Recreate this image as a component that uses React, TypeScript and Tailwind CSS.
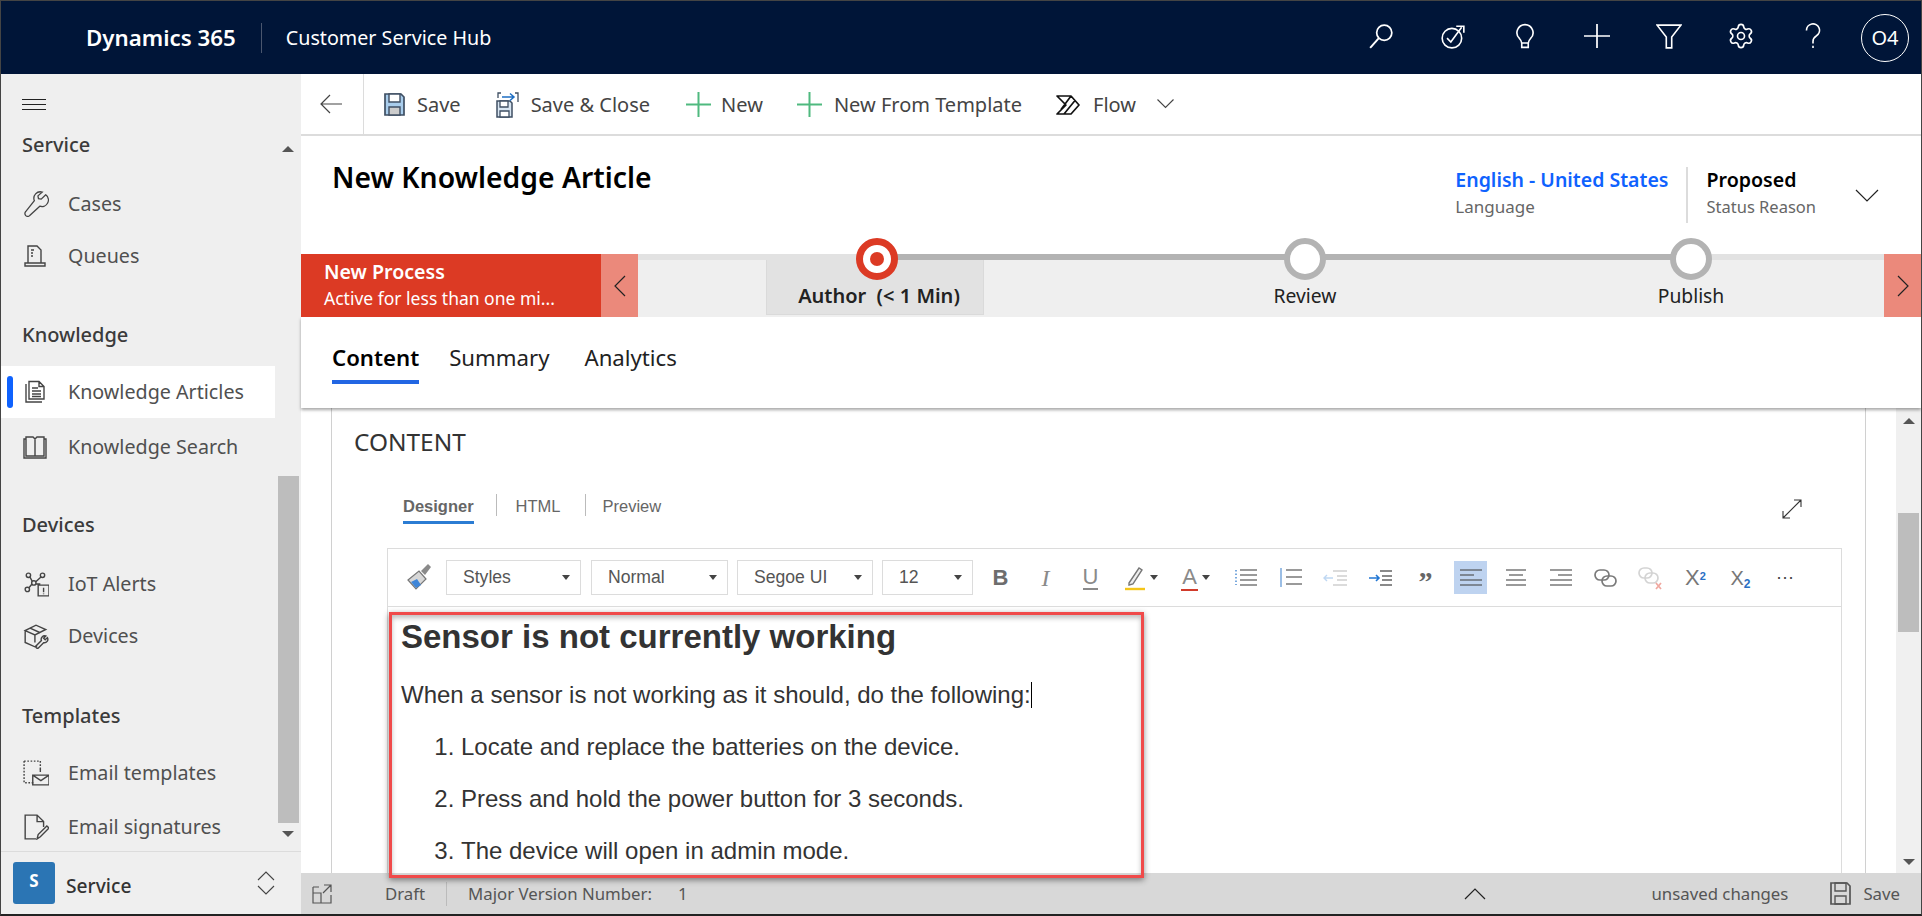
import type { ReactNode } from "react";
import { Settings } from "lucide-react";

const UI = "font-['Noto_Sans',sans-serif]";
const ARIAL = "font-['Liberation_Sans',Arial,sans-serif]";

function Svg({ size = 24, className, children }: { size?: number; className?: string; children: ReactNode }) {
  return (
    <svg width={size} height={size} viewBox="0 0 24 24" fill="none" stroke="currentColor" strokeWidth={1.3} className={className}>
      {children}
    </svg>
  );
}

const topIcons: ReactNode[] = [
  <Svg size={26}><circle cx="15" cy="9" r="7" strokeWidth={1.6} /><path d="M10 14 2 23" strokeWidth={1.8} /></Svg>,
  <Svg size={26}><circle cx="11" cy="14" r="9" strokeWidth={1.5} /><path d="m6.5 14 3.5 3.5L20 4M15 3h7v6" strokeWidth={1.5} /></Svg>,
  <Svg size={26}><path d="M12 1.5a7.5 7.5 0 0 0-5 13c1.2 1.2 1.8 2.4 2 4h6c.2-1.6.8-2.8 2-4a7.5 7.5 0 0 0-5-13zM9 18.500v4h6v-4" strokeWidth={1.5} /></Svg>,
  <Svg size={26}><path d="M12 1v22M0 12h24" strokeWidth={1.6} /></Svg>,
  <Svg size={26}><path d="M1 2h22l-8.500 11v10h-5V13zM1 2h22" strokeWidth={1.5} /></Svg>,
  <Settings size={28} strokeWidth={1.4} />,
  <Svg size={26}><path d="M6 7a6 6 0 1 1 9 5c-2 1.200-3 2.500-3 5v2M12 21v2" strokeWidth={1.5} /></Svg>,
];

function TopBar() {
  return (
    <header className={`flex h-[73px] shrink-0 items-center bg-[#001538] text-white ${UI}`}>
      <span className="ml-[85px] text-[22.300px] font-semibold">Dynamics 365</span>
      <span className="ml-[25px] h-[30px] w-px bg-[#4a566e]" />
      <span className="ml-[24px] text-[19.700px]">Customer Service Hub</span>
      <div className="ml-auto flex items-center">
        {topIcons.map((icon, i) => (
          <span key={i} className="flex w-[72px] -translate-y-[2px] justify-center">
            {icon}
          </span>
        ))}
        <span className="flex w-[72px] justify-center">
          <span className="flex h-[48px] w-[48px] items-center justify-center rounded-full border border-white text-[20px]">O4</span>
        </span>
      </div>
    </header>
  );
}

type NavItem = { label: string; icon: ReactNode; active?: boolean };

const WrenchIcon = (
  <Svg size={26}><path d="M21 3.500 16.800 7.500l-2.500-.5-.5-2.500L17.800 1a6 6 0 0 0-7.300 8L2.500 19a2.600 2.600 0 0 0 3.700 3.700L15.500 14A6 6 0 0 0 21 3.500z" strokeWidth={1.2} /></Svg>
);
const QueueIcon = (
  <Svg size={24}><path d="M5 19V2h9l4 4v13M2 22v-3h20v3zM8 6h3M8 9h2M8 12h2" strokeWidth={1.4} /></Svg>
);
const ArticleIcon = (
  <Svg size={24}><path d="M3 4v18h16M6 1.500V19h15V6.500L16 1.500zM16 1.500V6.500h5M9 8h6M9 11h9M9 14h9M9 16.500h9" strokeWidth={1.4} /></Svg>
);
const BookIcon = (
  <Svg size={24}><path d="M1 4h2v17h18V4h2v19H1zM3 21V2h7l2 2 2-2h7v19M12 4v17" strokeWidth={1.4} /></Svg>
);
const IotIcon = (
  <Svg size={26}><circle cx="4" cy="17" r="2" /><circle cx="5" cy="4" r="2" /><circle cx="18" cy="4" r="2" /><circle cx="10" cy="11" r="2" /><path d="m6.300 5.500 2.300 4M11.800 10l4.800-4.500M8.300 12 5.500 15.500M12 12h4M14 13h10v10H14zM19 15.500v4M19 20.800v.7" /></Svg>
);
const DeviceIcon = (
  <Svg size={26}><path d="M2 7v11l9 4 2-1M2 7l9 4 10-5-9-4zM11 11v7M6.500 4.800 16 9" /><path d="M22.500 13.500 20.500 15.500 19 14l2-2a3.200 3.200 0 0 0-4 4.200l-5 5a1.500 1.500 0 0 0 2 2l5-5a3.200 3.200 0 0 0 3.500-4.700z" /></Svg>
);
const TemplateIcon = (
  <Svg size={26}><path d="M1 1h15v8M1 1v20h9" strokeDasharray="1.500 1.500" /><path d="M9 14h15v9H9zM9 14l7.500 5 7.500-5M16 8v3" /></Svg>
);
const SignatureIcon = (
  <Svg size={26}><path d="M12 23H2V1h11l6 6v5M13 1v6h6M13 23l1-4 8-8 2 2-8 8z" /></Svg>
);

function NavSection({ title, className, listClass, items }: { title: string; className: string; listClass: string; items: NavItem[] }) {
  return (
    <section className={className}>
      <h3 className="ml-[21px] h-[28px] text-[20px] leading-[28px] font-medium text-[#3b3b3b]">{title}</h3>
      <ul className={`flex flex-col ${listClass}`}>
        {items.map((it) => (
          <li key={it.label} className={`relative flex h-[52px] items-center text-[19.700px] text-[#505050] ${it.active ? "bg-white" : ""}`}>
            {it.active && <span className="absolute top-[10px] left-[6px] h-[32px] w-[6px] rounded-[3px] bg-[#0f62fe]" />}
            <span className="ml-[22px] flex w-[45px] items-center text-[#444]">{it.icon}</span>
            {it.label}
          </li>
        ))}
      </ul>
    </section>
  );
}

function Sidebar() {
  return (
    <aside className={`flex w-[300px] shrink-0 flex-col bg-[#efefef] ${UI}`}>
      <div className="flex min-h-0 flex-1 overflow-hidden">
        <nav className="w-[274px] shrink-0">
          <div className="flex h-[57px] items-center pt-[4px] pl-[21px]">
            <svg width="24" height="12" viewBox="0 0 24 12" stroke="#222" strokeWidth="1"><path d="M0 .5h24M0 5.500h24M0 10.500h24" /></svg>
          </div>
          <NavSection title="Service" className="" listClass="mt-[19px]" items={[{ label: "Cases", icon: WrenchIcon }, { label: "Queues", icon: QueueIcon }]} />
          <NavSection title="Knowledge" className="mt-[39px]" listClass="mt-[17px] gap-[3px]" items={[{ label: "Knowledge Articles", icon: ArticleIcon, active: true }, { label: "Knowledge Search", icon: BookIcon }]} />
          <NavSection title="Devices" className="mt-[38px]" listClass="mt-[19px]" items={[{ label: "IoT Alerts", icon: IotIcon }, { label: "Devices", icon: DeviceIcon }]} />
          <NavSection title="Templates" className="mt-[40px]" listClass="mt-[17px] gap-[2px]" items={[{ label: "Email templates", icon: TemplateIcon }, { label: "Email signatures", icon: SignatureIcon }]} />
        </nav>
        <div className="flex w-[26px] flex-col items-center pt-[72px]">
          <span className="h-0 w-0 border-x-[6px] border-b-[6px] border-x-transparent border-b-[#555]" />
          <span className="mt-[324px] h-[347px] w-[21px] bg-[#bdbdbd]" />
          <span className="mt-[8px] h-0 w-0 border-x-[6px] border-t-[6px] border-x-transparent border-t-[#555]" />
        </div>
      </div>
      <div className="flex h-[63px] shrink-0 items-center border-t border-[#dcdcdc] pl-[12px]">
        <span className="flex h-[42px] w-[42px] items-center justify-center rounded-[3px] bg-[#2b75b4] pb-[4px] text-[17px] font-bold text-white">S</span>
        <span className="ml-[11px] pt-[6px] text-[19.200px] font-medium text-[#333]">Service</span>
        <svg className="ml-[125px]" width="20" height="26" viewBox="0 0 20 26" fill="none" stroke="#444" strokeWidth="1.100"><path d="m2 10 8-8 8 8M2 16l8 8 8-8" /></svg>
      </div>
    </aside>
  );
}

function SaveIcon({ tone = "color" }: { tone?: "color" | "gray" }) {
  const color = tone === "color";
  return (
    <svg width="21" height="23" viewBox="0 0 21 23" fill="none">
      <path d="M1 1h16l3 3v18H1z" fill={color ? "#a9cdec" : "none"} stroke={color ? "#3f4f63" : "#555"} strokeWidth="1.700" />
      <path d="M5 1v8h11V1z" fill={color ? "#fff" : "none"} stroke={color ? "#3f4f63" : "#555"} strokeWidth="1.400" />
      <path d="M5 22v-8h11v8z" fill={color ? "#ccc" : "none"} stroke={color ? "#3f4f63" : "#555"} strokeWidth="1.400" />
    </svg>
  );
}

function GreenPlus() {
  return (
    <svg width="25" height="25" viewBox="0 0 25 25" stroke="#4fb97f" strokeWidth="2"><path d="M12.500 0v25M0 12.500h25" /></svg>
  );
}

function CommandBar() {
  return (
    <div className={`flex h-[62px] shrink-0 items-center border-b-2 border-[#dcdcdc] bg-white text-[20px] text-[#444] ${UI}`}>
      <div className="flex h-full w-[63px] items-center justify-center border-r border-[#dcdcdc] pr-[2px]">
        <svg width="22" height="20" viewBox="0 0 22 20" fill="none" stroke="#444" strokeWidth="1.200"><path d="M22 10H1M10 1l-9 9 9 9" /></svg>
      </div>
      <button className="ml-[20px] flex items-center gap-[12px] pt-[1px]">
        <SaveIcon />
        Save
      </button>
      <button className="ml-[35px] flex items-center gap-[12px] pt-[1px]">
        <svg width="23" height="26" viewBox="0 0 23 26" fill="none">
          <path d="M1 9h13l2 2v14H1z" fill="#d9e6f2" stroke="#3f4f63" strokeWidth="1.500" />
          <path d="M4 9v6h8V9zM4 25v-6h9v6z" fill="#fff" stroke="#3f4f63" strokeWidth="1.300" />
          <path d="M5 1H2v5M19 1h3v9" stroke="#3f4f63" strokeWidth="1.300" />
          <path d="M6 5h12M14 1.500 18 5l-4 3.500" stroke="#1f6fc4" strokeWidth="1.500" />
        </svg>
        Save &amp; Close
      </button>
      <button className="ml-[36px] flex items-center gap-[10px] pt-[1px]">
        <GreenPlus />
        New
      </button>
      <button className="ml-[34px] flex items-center gap-[12px] pt-[1px]">
        <GreenPlus />
        New From Template
      </button>
      <button className="ml-[34px] flex items-center gap-[13px] pt-[1px]">
        <svg width="24" height="22" viewBox="0 0 24 22" fill="none" stroke="#111" strokeWidth="1.700" strokeLinejoin="round">
          <path d="M1 2h14l8 9-8 9H1l9-9zM15 2 5 15.500M19 6.500 8 20" />
        </svg>
        Flow
      </button>
      <svg className="ml-[21px]" width="17" height="10" viewBox="0 0 17 10" fill="none" stroke="#444" strokeWidth="1.100"><path d="m.5.500 8 8 8-8" /></svg>
    </div>
  );
}

function TitleRow() {
  return (
    <div className={`flex h-[118px] shrink-0 bg-white ${UI}`}>
      <h1 className="mt-[22px] ml-[31px] text-[28.300px] leading-[38px] font-semibold text-black">New Knowledge Article</h1>
      <div className="mt-[31px] ml-auto flex h-[56px] items-stretch">
        <div className="flex flex-col">
          <span className="text-[19.500px] leading-[26px] font-semibold text-[#0f62fe]">English - United States</span>
          <span className="mt-[1px] text-[17px] leading-[26px] text-[#666]">Language</span>
        </div>
        <span className="mx-[18px] w-[2px] bg-[#dcdcdc]" />
        <div className="flex flex-col">
          <span className="text-[19.600px] leading-[26px] font-semibold text-black">Proposed</span>
          <span className="mt-[1px] text-[16.500px] leading-[26px] text-[#666]">Status Reason</span>
        </div>
        <svg className="mt-[22px] mr-[42px] ml-[39px]" width="24" height="14" viewBox="0 0 24 14" fill="none" stroke="#222" strokeWidth="1.200"><path d="m1 1 11 11L23 1" /></svg>
      </div>
    </div>
  );
}

function Stage({ label, className, active }: { label: ReactNode; className: string; active?: boolean }) {
  return (
    <div className={`relative h-[55px] w-[218px] pt-[22px] text-center text-[19.300px] leading-[28px] text-[#222] ${className}`}>
      {active ? (
        <span className="absolute top-[-22px] left-[89px] flex h-[42px] w-[42px] items-center justify-center rounded-full border-[7px] border-[#dc3a24] bg-white">
          <span className="h-[14px] w-[14px] rounded-full bg-[#dc3a24]" />
        </span>
      ) : (
        <span className="absolute top-[-22px] left-[88px] h-[42px] w-[42px] rounded-full border-[6px] border-[#b3b3b3] bg-white" />
      )}
      {label}
    </div>
  );
}

function ProcessBar() {
  return (
    <div className={`z-10 flex h-[63px] shrink-0 ${UI}`}>
      <div className="w-[300px] bg-[#dc3a24] pt-[4px] pl-[23px] text-white">
        <div className="text-[19.600px] leading-[27px] font-semibold">New Process</div>
        <div className="text-[17.500px] leading-[27px]">Active for less than one mi...</div>
      </div>
      <div className="flex w-[37px] items-center justify-center bg-[#eb897b]">
        <svg width="12" height="22" viewBox="0 0 12 22" fill="none" stroke="#222" strokeWidth="1.200"><path d="M11 1 1 11l10 10" /></svg>
      </div>
      <div className="relative flex flex-1 bg-[#efefef] pt-[6px]">
        <span className="absolute inset-x-0 top-0 h-[6px] bg-[#e2e2e2]" />
        <span className="absolute top-0 left-[237px] h-[6px] w-[816px] bg-[#b3b3b3]" />
        <Stage active className="ml-[128px] border-x border-b border-[#dadada] bg-[#e2e2e2] pl-[8px]" label={<span className="text-[20px] font-semibold">Author&nbsp; (&lt; 1 Min)</span>} />
        <Stage className="ml-[212px]" label="Review" />
        <Stage className="ml-[168px]" label="Publish" />
      </div>
      <div className="flex w-[37px] items-center justify-center bg-[#eb897b]">
        <svg width="12" height="22" viewBox="0 0 12 22" fill="none" stroke="#222" strokeWidth="1.200"><path d="m1 1 10 10L1 21" /></svg>
      </div>
    </div>
  );
}

function Tabs() {
  return (
    <div className={`z-[5] flex h-[91px] shrink-0 bg-white pl-[31px] text-[22.200px] text-[#222] shadow-[0_2px_3px_rgba(0,0,0,0.35)] ${UI}`}>
      <div className="flex h-[67px] flex-col items-center border-b-4 border-[#2266e3] pt-[24px] font-semibold text-black">Content</div>
      <div className="ml-[30px] pt-[24px]">Summary</div>
      <div className="ml-[35px] pt-[24px]">Analytics</div>
    </div>
  );
}

function Lines({ kind }: { kind: "left" | "center" | "right" | "bullet" | "number" }) {
  const paths = {
    left: "M2 5h22M2 10h14M2 15h22M2 20h22",
    center: "M3 5h20M6 10h14M3 15h20M3 20h20",
    right: "M2 5h22M10 10h14M2 15h22M2 20h22",
    bullet: "M7 5h17M7 10h17M7 15h17M7 20h17",
    number: "M8 5h16M8 12h16M8 19h16",
  };
  return (
    <svg width="26" height="26" viewBox="0 0 26 26" fill="none" stroke={kind === "left" ? "#7d8794" : "#9a9a9a"} strokeWidth="2">
      <path d={paths[kind]} />
      {kind === "bullet" && <path d="M3 5v15" stroke="#7aa9dd" strokeDasharray="1.500 2" />}
      {kind === "number" && <path d="M3 3v19" stroke="#7aa9dd" strokeWidth="1.500" />}
    </svg>
  );
}

function Caret() {
  return <span className="ml-[4px] inline-block h-0 w-0 border-x-[4px] border-t-[5px] border-x-transparent border-t-[#444]" />;
}

function SelectBox({ label, className }: { label: string; className: string }) {
  return (
    <div className={`flex h-[35px] items-center justify-between border border-[#dcdcdc] pr-[10px] pl-[16px] text-[17.600px] text-[#555] ${className}`}>
      {label}
      <span className="h-0 w-0 border-x-[4px] border-t-[5px] border-x-transparent border-t-[#444]" />
    </div>
  );
}

// pen and font-colour have a caret, so their slots are wider
const tools: { node: ReactNode; wide?: boolean }[] = [
  { node: <span className="text-[22px] font-bold text-[#6d6d6d]">B</span> },
  { node: <span className="font-['Liberation_Serif',serif] text-[24px] text-[#8a8a8a] italic">I</span> },
  { node: <span className="border-b-2 border-[#8a8a8a] text-[22px] leading-[22px] text-[#8a8a8a]">U</span> },
  {
    wide: true,
    node: (
      <span className="flex items-center">
        <svg width="22" height="28" viewBox="0 0 22 28" fill="none">
          <path d="M5 19 15 4l3 2-9 14-4 1z" stroke="#777" strokeWidth="1.400" fill="#eee" />
          <path d="M1 25h20" stroke="#f5c518" strokeWidth="2.400" />
        </svg>
        <Caret />
      </span>
    ),
  },
  {
    wide: true,
    node: (
      <span className="flex items-center">
        <span className="border-b-2 border-[#d13b2b] px-[1px] text-[22px] leading-[24px] text-[#8a8a8a]">A</span>
        <Caret />
      </span>
    ),
  },
  { node: <Lines kind="bullet" /> },
  { node: <Lines kind="number" /> },
  {
    node: (
      <svg width="26" height="22" viewBox="0 0 26 22" fill="none" opacity="0.35">
        <path d="M10 4h14M14 9h10M14 13h10M10 18h14" stroke="#9a9a9a" strokeWidth="2" />
        <path d="M10 11H1M4 8l-3 3 3 3" stroke="#4a90dd" strokeWidth="1.400" />
      </svg>
    ),
  },
  {
    node: (
      <svg width="26" height="22" viewBox="0 0 26 22" fill="none">
        <path d="M12 4h12M14 9h10M14 13h10M12 18h12" stroke="#8a8a8a" strokeWidth="2" />
        <path d="M1 11h10M8 8l3 3-3 3" stroke="#2277d4" strokeWidth="1.600" />
      </svg>
    ),
  },
  { node: <span className="mt-[8px] font-['Liberation_Serif',serif] text-[28px] leading-[26px] font-bold text-[#666]">”</span> },
  { node: <span className="flex h-[33px] w-[33px] items-center justify-center bg-[#bed3f0]"><Lines kind="left" /></span> },
  { node: <Lines kind="center" /> },
  { node: <Lines kind="right" /> },
  {
    node: (
      <svg width="26" height="24" viewBox="0 0 26 24" fill="none" stroke="#7a7a7a" strokeWidth="1.700"><rect x="2" y="4" width="14" height="10" rx="5" /><rect x="9" y="10" width="14" height="10" rx="5" /></svg>
    ),
  },
  {
    node: (
      <svg width="26" height="24" viewBox="0 0 26 24" fill="none" strokeWidth="1.700"><g stroke="#d4d4d4"><rect x="1" y="2" width="13" height="10" rx="5" /><rect x="7" y="7" width="13" height="10" rx="5" /></g><path d="m18 17 5 6M23 17l-5 6" stroke="#f0a8a0" /></svg>
    ),
  },
  { node: <span className="text-[22px] text-[#777]">X<sup className="text-[11px] font-bold text-[#2b6fc4]">2</sup></span> },
  { node: <span className="text-[20px] text-[#777]">X<sub className="text-[12px] font-bold text-[#2b6fc4]">2</sub></span> },
  { node: <span className="pb-[8px] text-[18px] tracking-[1px] text-[#444]">...</span> },
];

function EditorToolbar() {
  return (
    <div className={`flex h-[58px] items-center border-b border-[#dcdcdc] ${ARIAL}`}>
      <svg className="ml-[18px]" width="26" height="30" viewBox="0 0 26 30">
        <path d="M2 17 13 8l7 8-10 10z" fill="#d7d7d7" stroke="#777" strokeWidth="1.200" />
        <path d="m5 19 6-3 4 6-5 3z" fill="#3f86d8" />
        <path d="m15 8 7-7 3 3-6 8z" fill="#8a8a8a" />
      </svg>
      <SelectBox label="Styles" className="ml-[14px] w-[135px]" />
      <SelectBox label="Normal" className="ml-[10px] w-[137px]" />
      <SelectBox label="Segoe UI" className="ml-[9px] w-[136px]" />
      <SelectBox label="12" className="ml-[9px] w-[91px]" />
      <div className="ml-[5px] flex">
        {tools.map((t, i) => (
          <span key={i} className={`flex h-[35px] items-center justify-center ${t.wide ? "w-[55px]" : "w-[45px]"}`}>
            {t.node}
          </span>
        ))}
      </div>
    </div>
  );
}

function Editor() {
  return (
    <div className={`mt-[14px] mr-[23px] ml-[55px] border border-b-0 border-[#dcdcdc] ${ARIAL}`}>
      <EditorToolbar />
      <div className="pl-[13px] text-[24px] text-[#333]">
        <h2 className="flex h-[60px] items-center text-[33px] font-bold">Sensor is not currently working</h2>
        <p className="mt-[2px] flex h-[52px] items-center">
          When a sensor is not working as it should, do the following:
          <span className="h-[26px] w-px bg-black" />
        </p>
        <ol className="list-decimal pl-[60px]">
          <li className="h-[52px] leading-[52px]">Locate and replace the batteries on the device.</li>
          <li className="h-[52px] leading-[52px]">Press and hold the power button for 3 seconds.</li>
          <li className="h-[52px] leading-[52px]">The device will open in admin mode.</li>
        </ol>
      </div>
    </div>
  );
}

function ContentArea() {
  return (
    <div className="flex min-h-0 flex-1 overflow-hidden bg-white">
      <div className="ml-[30px] w-[1535px] shrink-0 border-x border-[#d0d0d0]">
        <h2 className={`mt-[20px] ml-[22px] text-[24.400px] leading-[28px] text-[#333] ${UI}`}>CONTENT</h2>
        <div className={`mt-[38px] ml-[71px] flex h-[40px] items-start pr-[63px] text-[16.500px] leading-[24px] text-[#666] ${ARIAL}`}>
          <span className="h-[30px] border-b-[3px] border-[#2b7cd3] font-bold">Designer</span>
          <span className="mr-[19px] ml-[22px] h-[22px] w-px bg-[#bbb]" />
          <span>HTML</span>
          <span className="mr-[17px] ml-[24px] h-[22px] w-px bg-[#bbb]" />
          <span>Preview</span>
          <svg className="mt-[5px] ml-auto" width="20" height="20" viewBox="0 0 20 20" fill="none" stroke="#333" strokeWidth="1.100"><path d="M1 19 19 1M12 1h7v7M1 12v7h7" /></svg>
        </div>
        <Editor />
      </div>
      <div className="ml-[30px] flex w-[25px] flex-col items-center bg-[#f0f0f0] pt-[10px]">
        <span className="h-0 w-0 border-x-[6px] border-b-[6px] border-x-transparent border-b-[#555]" />
        <span className="mt-[89px] h-[119px] w-[21px] bg-[#bdbdbd]" />
        <span className="mt-auto mb-[8px] h-0 w-0 border-x-[6px] border-t-[6px] border-x-transparent border-t-[#555]" />
      </div>
    </div>
  );
}

function StatusBar() {
  return (
    <footer className={`flex h-[41px] shrink-0 items-center bg-[#d8d8d8] text-[16.800px] text-[#555] ${UI}`}>
      <svg className="ml-[11px]" width="20" height="20" viewBox="0 0 20 20" fill="none" stroke="#555" strokeWidth="1.200"><path d="M1 9h8v10H1zM1 3h6M1 3v6M12 1h7v7M19 1l-8 8M19 11v8H9" /></svg>
      <span className="ml-[53px]">Draft</span>
      <span className="mx-[21px] h-[24px] w-px bg-[#bbb]" />
      <span>Major Version Number:</span>
      <span className="ml-[26px]">1</span>
      <svg className="mr-[165px] ml-auto" width="22" height="12" viewBox="0 0 22 12" fill="none" stroke="#222" strokeWidth="1.200"><path d="m1 11 10-10 10 10" /></svg>
      <span>unsaved changes</span>
      <span className="ml-[42px] flex items-center gap-[12px] pr-[21px]">
        <SaveIcon tone="gray" />
        Save
      </span>
    </footer>
  );
}

export default function App() {
  return (
    <div className="relative flex h-[916px] w-[1922px] flex-col overflow-hidden border border-b-2 border-[#444] border-b-[#222] bg-white">
      <TopBar />
      <div className="flex min-h-0 flex-1">
        <Sidebar />
        <main className="flex min-w-0 flex-1 flex-col">
          <CommandBar />
          <TitleRow />
          <ProcessBar />
          <Tabs />
          <ContentArea />
          <StatusBar />
        </main>
      </div>
      {/* red callout drawn over the article */}
      <div className="pointer-events-none absolute top-[611px] left-[388px] z-20 h-[266px] w-[755px] border-[3px] border-[#f04a4a] shadow-[0_2px_6px_rgba(0,0,0,0.45),inset_0_3px_5px_rgba(0,0,0,0.25)]" />
    </div>
  );
}
